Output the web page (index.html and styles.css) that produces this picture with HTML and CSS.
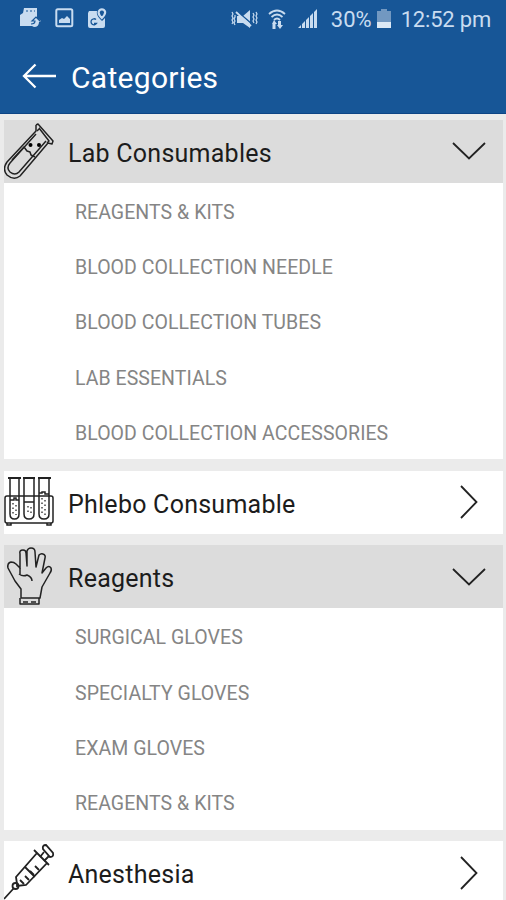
FILE: index.html
```
<!DOCTYPE html>
<html lang="en">
<head>
    <meta charset="UTF-8">
    <title>Categories</title>
    <link rel="stylesheet" href="styles.css">
</head>
<body>
<header class="top">
    <div class="status">
        <div class="status_left">
            <svg width="22" height="22" viewBox="0 0 22 22">
                <path fill="#c9dcf0" d="M4 1h13v10l4 3-2 1q0 5-5 5l-2-1H0V8l3-2z"/>
                <path fill="none" stroke="#175697" stroke-width="1.200" d="M6 4h2M10 4h2M14 4h1M11 17q4 0 4-3h-3l4-4 4 4"/>
            </svg>
            <svg width="19" height="20" viewBox="0 0 19 20">
                <rect x="1.3" y="1.3" width="16" height="17" rx="1.5" fill="none" stroke="#c9dcf0" stroke-width="2"/>
                <path fill="#c9dcf0" d="M4 15v-3l3-2 2 1 3-3 3 3v4z"/>
            </svg>
            <svg width="20" height="21" viewBox="0 0 20 21">
                <path fill="#c9dcf0" d="M2 3h8q-1 4 3 8l2 2 3-3v8q0 2-2 2H3q-2 0-2-2V5z"/>
                <path fill="none" stroke="#175697" stroke-width="1.3" d="M9 11.500a3 3 0 1 0 .5 4H7"/>
                <path fill="none" stroke="#c9dcf0" stroke-width="2.2" d="M14.8 10q-4-4-3-6.500a3.300 3.300 0 0 1 6.200 0q.8 2.500-3.200 6.500z"/>
            </svg>
        </div>
        <div class="status_right">
            <svg class="mute" width="27" height="20" viewBox="0 0 27 20">
                <path fill="#c9dcf0" d="M6 7h6l7-6v18l-7-5H6z"/>
                <path stroke="#175697" stroke-width="1.500" d="M7 3l14 12"/>
                <path fill="none" stroke="#c9dcf0" stroke-width="1.800" d="M5 3l15 14"/>
                <path fill="none" stroke="#c9dcf0" stroke-width="1.2" d="M1 3l1 2-1 2 1 2-1 2 1 2-1 2M4 6v2l-1 2 1 2-1 2 1 2M22 4l1 2-1 2 1 2-1 2 1 2M25 3l1 2-1 2 1 2-1 2 1 2-1 2"/>
            </svg>
            <svg class="wifi" width="18" height="20" viewBox="0 0 18 20">
                <path fill="none" stroke="#c9dcf0" stroke-width="1.8" d="M1 5q8-7 16 0M3.500 8q5.500-5 11 0M6 11q3-3 6 0"/>
                <path fill="#c9dcf0" d="M6 11l3 4H7.500v5h-3v-5H4zM12 20l-3-4h1v-4h3v4h2z"/>
            </svg>
            <svg class="signal" width="20" height="20" viewBox="0 0 20 20">
                <path fill="#c9dcf0" d="M0 19l3-3v3zM4 15l3-3v7H4zM8 11l3-3v11H8zM12 7l3-3v15h-3zM16 3l3-3v19h-3z"/>
            </svg>
            <span class="percent">30%</span>
            <svg class="battery" width="14" height="20" viewBox="0 0 14 20">
                <path fill="#7298c1" d="M4 0h6v2h4v17H0V2h4z"/>
                <path fill="#dce9f6" d="M0 13h14v6H0z"/>
            </svg>
            <span class="clock">12:52 pm</span>
        </div>
    </div>
    <div class="title_bar">
        <svg width="35" height="26" viewBox="0 0 35 26">
            <path fill="none" stroke="#fff" stroke-width="2.300" d="M34 13H2M13.500 1.500L2 13l11.500 11.500"/>
        </svg>
        <h1>Categories</h1>
    </div>
</header>
<main class="list">
    <section class="card open">
        <div class="card_head">
            <svg class="icon" width="54" height="63" viewBox="0 0 54 63">
                <g fill="none" stroke="#222" stroke-width="1.500" stroke-linejoin="round">
                    <path d="M32 5l2-1 15 17-1 3-4-1M32 5v6L3 42q-5 7 0 13 7 6 13 1l28-33"/>
                    <path d="M35 8l10 13-2 2M32 14L6 43q-4 5 0 9 5 4 9 0l27-31M33 11l3-3"/>
                    <path d="M8 40l12-13 3 4 3 1 1 3 4 2"/>
                </g>
                <circle cx="26.500" cy="25" r="2"/>
                <circle cx="35" cy="25" r="2"/>
            </svg>
            <h2>Lab Consumables</h2>
            <svg class="arrow" width="34" height="18" viewBox="0 0 34 18"><path d="M1 1l16 15.500L33 1"/></svg>
        </div>
        <ul>
            <li>REAGENTS &amp; KITS</li>
            <li>BLOOD COLLECTION NEEDLE</li>
            <li>BLOOD COLLECTION TUBES</li>
            <li>LAB ESSENTIALS</li>
            <li>BLOOD COLLECTION ACCESSORIES</li>
        </ul>
    </section>
    <section class="card">
        <div class="card_head">
            <svg class="icon" width="54" height="63" viewBox="0 0 54 63">
                <g fill="none" stroke="#222" stroke-width="1.500">
                    <rect x="1" y="25" width="48" height="27" rx="2"/>
                    <path d="M3 52v2h4v-2M43 52v2h4v-2"/>
                    <path d="M4 7h13M19 7h12M34 7h13" stroke-width="2"/>
                    <path d="M6 8v35q0 5 4.500 5t4.500-5V8M20 8v35q0 5 5 5t5-5V8M35 8v35q0 5 5 5t5-5V8"/>
                    <path d="M6 29h4v-2h2v2h3M20 31h10M35 22h3v-1h3v2h4"/>
                </g>
                <path fill="none" stroke="#444" stroke-width="1.500" stroke-dasharray="1.500 3" d="M9 32v12M12 34v10M24 35v9M27 36v8M38 27v17M41 29v15"/>
            </svg>
            <h2>Phlebo Consumable</h2>
            <svg class="arrow side" width="18" height="34" viewBox="0 0 18 34"><path d="M1 1l15.500 16L1 33"/></svg>
        </div>
    </section>
    <section class="card open">
        <div class="card_head">
            <svg class="icon" width="54" height="63" viewBox="0 0 54 63">
                <g fill="none" stroke="#222" stroke-width="1.500" stroke-linejoin="round">
                    <path d="M17 53v-9l-6-8-7-13q-1-5 3-6 3 0 5 2l4 4V9q-1-4 3-4 3 0 3 3l1 13V6q1-3 4-3 4 0 4 4l1 15 3-12q2-2 4-1 3 1 2 4l-3 15 4-5q3-3 5 0 1 2-1 5l-8 14-2 11z"/>
                    <path d="M15 29q4 3 8 1 5 2 5 6M16 53v6h19v-6M19 57h5M27 57h5M16 23v6"/>
                </g>
            </svg>
            <h2>Reagents</h2>
            <svg class="arrow" width="34" height="18" viewBox="0 0 34 18"><path d="M1 1l16 15.500L33 1"/></svg>
        </div>
        <ul>
            <li>SURGICAL GLOVES</li>
            <li>SPECIALTY GLOVES</li>
            <li>EXAM GLOVES</li>
            <li>REAGENTS &amp; KITS</li>
        </ul>
    </section>
    <section class="card">
        <div class="card_head">
            <svg class="icon" width="54" height="63" viewBox="0 0 54 63">
                <g fill="none" stroke="#222" stroke-width="1.800">
                    <path d="M0 58l10-11M13 43l-1-7 21-24 10 10-21 22-9 1zM30 9l15 15M21 26l10 10"/>
                    <path d="M25 39l-4-4M30 34l-4-4M35 29l-4-4M20 43l-4-4M36 16l4-5M40 20l5-5"/>
                    <path d="M39 8q-1-4 3-4l7 8q1 4-3 4z"/>
                    <circle cx="11.500" cy="45" r="3"/>
                </g>
            </svg>
            <h2>Anesthesia</h2>
            <svg class="arrow side" width="18" height="34" viewBox="0 0 18 34"><path d="M1 1l15.500 16L1 33"/></svg>
        </div>
    </section>
</main>
</body>
</html>
```
FILE: styles.css
```
body {
    margin: 0;
    height: 900px;
    overflow: hidden;
    background: #ebebeb;
    font-family: Roboto, "Liberation Sans", sans-serif;
}
h1, h2, ul {
    margin: 0;
    padding: 0;
    font-weight: 400;
}
svg {
    display: block;
    flex: none;
}
.top {
    height: 114px;
    background: #175697;
    border-bottom: 1px solid #0d4585;
    box-sizing: border-box;
}
.status {
    display: flex;
    justify-content: space-between;
    height: 38px;
    padding: 0 15px 0 20px;
    color: #c9dcf0;
}
.status_left,
.status_right {
    display: flex;
    align-items: center;
}
.status_left {
    gap: 13px;
    padding-bottom: 2px;
}
.status_right {
    font-size: 22px;
    white-space: nowrap;
}
.wifi {
    margin-left: 10px;
}
.signal {
    margin-left: 12px;
}
.percent {
    margin-left: 13px;
}
.battery {
    margin-left: 5px;
}
.clock {
    margin-left: 10px;
    letter-spacing: -.2px;
}
.title_bar {
    display: flex;
    align-items: center;
    gap: 14px;
    height: 75px;
    padding-left: 22px;
    color: #fff;
}
.title_bar h1 {
    padding-top: 3px;
    font-size: 30px;
    letter-spacing: .3px;
}
.list {
    display: flex;
    flex-direction: column;
    gap: 11.3px;
    padding: 5.500px 3px 0 4px;
}
.card {
    flex: none;
    background: #fff;
}
.card_head {
    display: flex;
    align-items: center;
    height: 63.300px;
}
.open .card_head {
    background: #dcdcdc;
}
.card_head h2 {
    flex: 1;
    padding: 4px 0 0 10px;
    font-size: 25px;
    letter-spacing: .25px;
    color: #1c1c1c;
}
.arrow {
    margin-right: 17px;
    fill: none;
    stroke: #222;
    stroke-width: 1.800;
}
.side {
    margin-right: 25px;
}
.card ul {
    list-style: none;
}
.card li {
    height: 55.300px;
    padding-left: 71px;
    line-height: 60px;
    font-size: 19.500px;
    letter-spacing: .05px;
    color: #858585;
}
```
